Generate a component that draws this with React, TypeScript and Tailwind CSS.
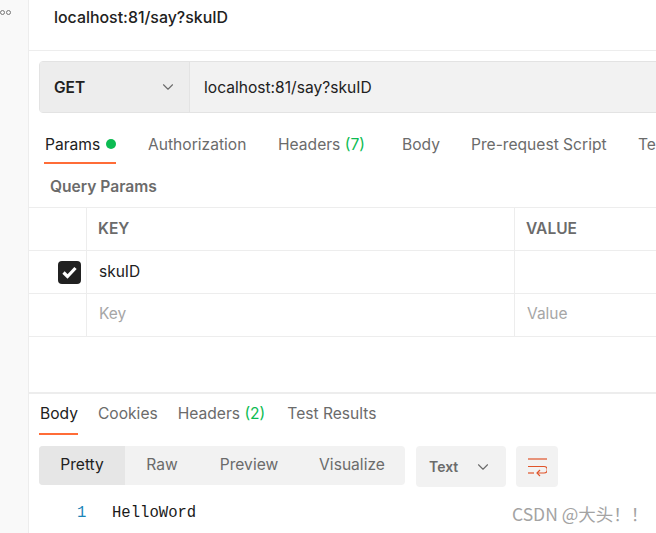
import { ChevronDown } from 'lucide-react';

const requestTabs = [
  { label: 'Authorization', w: 'w-[130px]' },
  { label: 'Headers', count: '(7)', w: 'w-[124px]' },
  { label: 'Body', w: 'w-[69px]' },
  { label: 'Pre-request Script', w: 'w-[167px]' },
  { label: 'Tests', w: 'w-[60px]' },
];

const viewModes = [
  { label: 'Raw', w: 'w-[74px]' },
  { label: 'Preview', w: 'w-[100px]' },
  { label: 'Visualize', w: 'w-[106px]' },
];

export default function App() {
  return (
    <div className="relative flex h-[533px] w-[656px] overflow-hidden bg-white font-['Inter',sans-serif] text-[#6b6b6b]">
      {/* Sidebar edge */}
      <div className="h-full w-[29px] shrink-0 border-r border-[#ededed] bg-[#f9f9f9] pt-[10px]">
        <div className="flex gap-px">
          <span className="h-[5px] w-[5px] rounded-full border border-[#777]" />
          <span className="h-[5px] w-[5px] rounded-full border border-[#777]" />
        </div>
      </div>

      <div className="flex h-full w-[627px] shrink-0 flex-col">
        {/* Title */}
        <div className="flex h-[51px] shrink-0 items-start border-b border-[#ededed] pl-[25px] pt-[8px]">
          <span className="text-[15.9px] leading-[20px] font-medium text-[#212121]">localhost:81/say?skuID</span>
        </div>

        {/* URL bar */}
        <div className="mt-[10px] ml-[10px] flex h-[52px] w-[640px] shrink-0 rounded-l-[4px] border border-[#e3e3e3] bg-[#f2f2f2]">
          <div className="flex w-[150px] shrink-0 items-center justify-between border-r border-[#e3e3e3] bg-[#ededed] pl-[14px] pr-[12px]">
            <span className="pt-px text-[15.5px] font-semibold text-[#212121]">GET</span>
            <ChevronDown className="h-[18px] w-[18px] text-[#6b6b6b]" strokeWidth={1.5} />
          </div>
          <span className="self-center pl-[14px] pt-px text-[15.6px] text-[#212121]">localhost:81/say?skuID</span>
        </div>

        {/* Request tabs */}
        <div className="mt-[20px] flex h-[31px] w-[680px] shrink-0 pl-[15px] pt-px text-[15.6px] leading-[22px]">
          <div className="mr-[32px] flex h-[30px] w-[72px] shrink-0 gap-[6px] border-b-2 border-[#ff6c37] pl-px text-[#212121]">
            <span>Params</span>
            <span className="mt-[5px] h-[10px] w-[10px] shrink-0 rounded-full bg-[#0cbb52]" />
          </div>
          {requestTabs.map((tab) => (
            <div key={tab.label} className={`${tab.w} shrink-0`}>
              {tab.label}
              {tab.count && <span className="text-[#0cbb52]"> {tab.count}</span>}
            </div>
          ))}
        </div>

        <div className="mt-[12px] h-[31px] shrink-0 pl-[21px] text-[15.6px] leading-[22px] font-semibold">Query Params</div>

        {/* Params table */}
        <div className="shrink-0 border-t border-[#ededed] text-[15.5px]">
          <div className="flex h-[43px] border-b border-[#ededed] font-semibold">
            <div className="w-[58px] border-r border-[#ededed]" />
            <div className="flex w-[428px] items-center border-r border-[#ededed] pl-[11px]">KEY</div>
            <div className="flex items-center pl-[11px]">VALUE</div>
          </div>
          <div className="flex h-[43px] border-b border-[#ededed]">
            <div className="flex w-[58px] items-center justify-end border-r border-[#ededed] pr-[5px]">
              <span className="flex h-[23px] w-[23px] items-center justify-center rounded-[4px] bg-[#212121]">
                <svg width="17" height="17" viewBox="0 0 17 17" fill="none" stroke="#fff" strokeWidth="3.2">
                  <path d="M2.5 8.5l4 4 8-8.5" />
                </svg>
              </span>
            </div>
            <div className="flex w-[428px] items-center border-r border-[#ededed] pl-[12px] text-[#212121]">skuID</div>
            <div />
          </div>
          <div className="flex h-[43px] border-b border-[#ededed] text-[#a6a6a6]">
            <div className="w-[58px] border-r border-[#ededed]" />
            <div className="flex w-[428px] items-center border-r border-[#ededed] pb-[2px] pl-[12px]">Key</div>
            <div className="flex items-center pb-[2px] pl-[12px]">Value</div>
          </div>
        </div>

        {/* Response */}
        <div className="mt-[55px] shrink-0 border-t-[2px] border-[#ededed]">
          <div className="flex h-[41px] pl-[10px] pt-[9px] text-[15.6px] leading-[22px]">
            <div className="mr-[20px] h-[32px] border-b-2 border-[#ff6c37] pl-px text-[#212121]">Body</div>
            <div className="mr-[20px]">Cookies</div>
            <div className="mr-[22px]">
              Headers <span className="text-[#0cbb52]">(2)</span>
            </div>
            <div>Test Results</div>
          </div>

          <div className="mt-[11px] flex items-start pl-[10px]">
            <div className="flex h-[39px] w-[366px] overflow-hidden rounded-[4px] bg-[#f2f2f2] pb-[2px] text-[15.6px]">
              <div className="-mb-[2px] flex w-[86px] items-center justify-center bg-[#e6e6e6] pb-[2px] text-[#212121]">Pretty</div>
              {viewModes.map((mode) => (
                <div key={mode.label} className={`flex ${mode.w} items-center justify-center`}>
                  {mode.label}
                </div>
              ))}
            </div>
            <div className="ml-[11px] flex h-[41px] w-[90px] items-center justify-between rounded-[4px] bg-[#f2f2f2] pl-[13px] pr-[14px] text-[14px] font-semibold">
              <span>Text</span>
              <ChevronDown className="h-[18px] w-[18px]" strokeWidth={1.5} />
            </div>
            <div className="ml-[10px] flex h-[41px] w-[42px] items-center justify-center rounded-[4px] bg-[#f2f2f2]">
              <svg width="20" height="20" viewBox="0 0 20 20" fill="none" stroke="#e0542a" strokeWidth="1.2">
                <path d="M1 2h19" />
                <path d="M1 9.5h16a3 3 0 0 1 0 6.5H10" />
                <path d="M13 13l-3 3 3 3" />
                <path d="M1 16h6" />
              </svg>
            </div>
          </div>

          <div className="mt-[16px] flex pl-[48px] font-['Liberation_Mono',monospace] text-[15.6px] leading-[20px]">
            <span className="w-[35px] text-[#1a85b8]">1</span>
            <span className="text-[#1a1a1a]">HelloWord</span>
          </div>
        </div>
      </div>

      {/* CSDN watermark */}
      <div className="absolute left-[512px] top-[503px] font-['Noto_Sans_CJK_SC','Liberation_Sans',sans-serif] text-[17.5px] leading-[22px] text-[#a3a3a3]">
        CSDN @大头！！
      </div>
    </div>
  );
}
